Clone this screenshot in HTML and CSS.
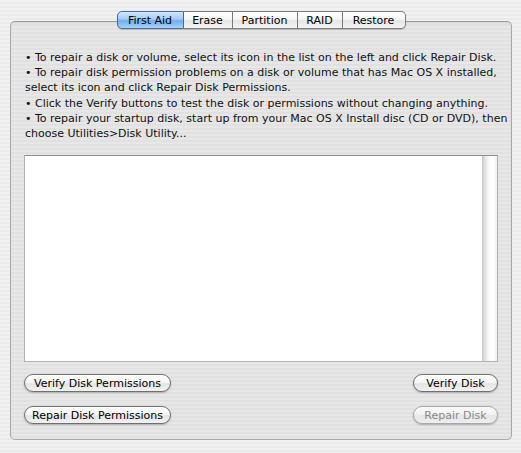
FILE: index.html
```html
<!DOCTYPE html>
<html lang="en">
<head>
  <meta charset="UTF-8">
  <title>Disk Utility - First Aid</title>
  <link rel="stylesheet" href="styles.css">
</head>
<body>
  <div id="window">
    <div class="tabs">
      <span class="tab selected">First Aid</span>
      <span class="tab">Erase</span>
      <span class="tab">Partition</span>
      <span class="tab">RAID</span>
      <span class="tab">Restore</span>
    </div>
    <div class="tabbox">
      <div class="help">
        <p>• To repair a disk or volume, select its icon in the list on the left and click Repair Disk.</p>
        <p>• To repair disk permission problems on a disk or volume that has Mac OS X installed,<br>select its icon and click Repair Disk Permissions.</p>
        <p>• Click the Verify buttons to test the disk or permissions without changing anything.</p>
        <p>• To repair your startup disk, start up from your Mac OS X Install disc (CD or DVD), then<br>choose Utilities&gt;Disk Utility...</p>
      </div>
      <div class="log">
        <div class="log-text"></div>
        <div class="scrolltrack"></div>
      </div>
      <div class="buttons">
        <div class="row">
          <button class="wide">Verify Disk Permissions</button>
          <button class="narrow">Verify Disk</button>
        </div>
        <div class="row">
          <button class="wide">Repair Disk Permissions</button>
          <button class="narrow" disabled>Repair Disk</button>
        </div>
      </div>
    </div>
  </div>
</body>
</html>
```

FILE: styles.css
```css
body {
  margin: 0;
  padding: 0;
  font-family: "DejaVu Sans", sans-serif;
  font-size: 11px;
  color: #000;
  background: repeating-linear-gradient(to bottom, #f1f1f1 0, #f1f1f1 2px, #eaeaea 2px, #eaeaea 4px);
  height: 453px;
  overflow: hidden;
}
#window {
  padding-top: 11px;
}
.tabs {
  display: flex;
  justify-content: center;
  position: relative;
  z-index: 2;
  height: 18px;
  margin-left: 10px;
  width: 502px;
}
.tab {
  display: flex;
  align-items: center;
  justify-content: center;
  height: 16px;
  border: 1px solid #7c7c7c;
  border-left: none;
  background: linear-gradient(to bottom, #ffffff 0%, #f6f6f6 45%, #e6e6e6 55%, #f4f4f4 100%);
  box-shadow: 0 1px 1px rgba(0, 0, 0, 0.18);
}
.tab:nth-child(1) { width: 65px; border-left: 1px solid #5b6f8c; border-radius: 5px 0 0 5px; }
.tab:nth-child(2) { width: 48px; }
.tab:nth-child(3) { width: 64px; }
.tab:nth-child(4) { width: 44px; }
.tab:nth-child(5) { width: 62px; border-radius: 0 5px 5px 0; }
.tab.selected {
  border-color: #4a6a9c;
  background: linear-gradient(to bottom, #d3e6fb 0%, #a3cbf5 45%, #6eaef0 55%, #a6d3fb 100%);
}
.tabbox {
  margin-left: 10px;
  margin-top: -8px;
  width: 500px;
  height: 417px;
  border: 1px solid #a9a9a9;
  border-top-color: #9a9a9a;
  border-radius: 5px;
  background: repeating-linear-gradient(to bottom, #e7e7e7 0, #e7e7e7 2px, #e1e1e1 2px, #e1e1e1 4px);
  box-shadow: inset 0 1px 2px rgba(0, 0, 0, 0.08);
}
.help {
  padding: 28px 0 0 14px;
}
.help p {
  margin: 0;
  line-height: 15.2px;
  white-space: nowrap;
  color: #111;
}
.log {
  display: flex;
  margin: 14px 13px 0 13px;
  height: 205px;
  border: 1px solid #b2b2b2;
  border-top-color: #8c8c8c;
  background: #fff;
}
.log-text {
  flex: 1;
}
.scrolltrack {
  width: 15px;
  background: linear-gradient(to right, #c9c9c9 0%, #e8e8e8 25%, #fbfbfb 50%, #ffffff 75%, #eeeeee 100%);
}
.buttons {
  padding: 12px 13px 0 13px;
  display: flex;
  flex-direction: column;
  gap: 14px;
}
.row {
  display: flex;
  justify-content: space-between;
}
button {
  font-family: "DejaVu Sans", sans-serif;
  font-size: 11px;
  color: #000;
  height: 18px;
  padding: 0;
  border: 1px solid #6f6f6f;
  border-radius: 9px;
  background: linear-gradient(to bottom, #ffffff 0%, #f7f7f7 45%, #e4e4e4 55%, #f2f2f2 100%);
  box-shadow: 0 1px 2px rgba(0, 0, 0, 0.25);
}
button.wide {
  width: 147px;
}
button.narrow {
  width: 85px;
}
button:disabled {
  color: #8a8a8a;
  border-color: #a8a8a8;
  background: linear-gradient(to bottom, #fafafa 0%, #f2f2f2 45%, #e6e6e6 55%, #eeeeee 100%);
}
```
